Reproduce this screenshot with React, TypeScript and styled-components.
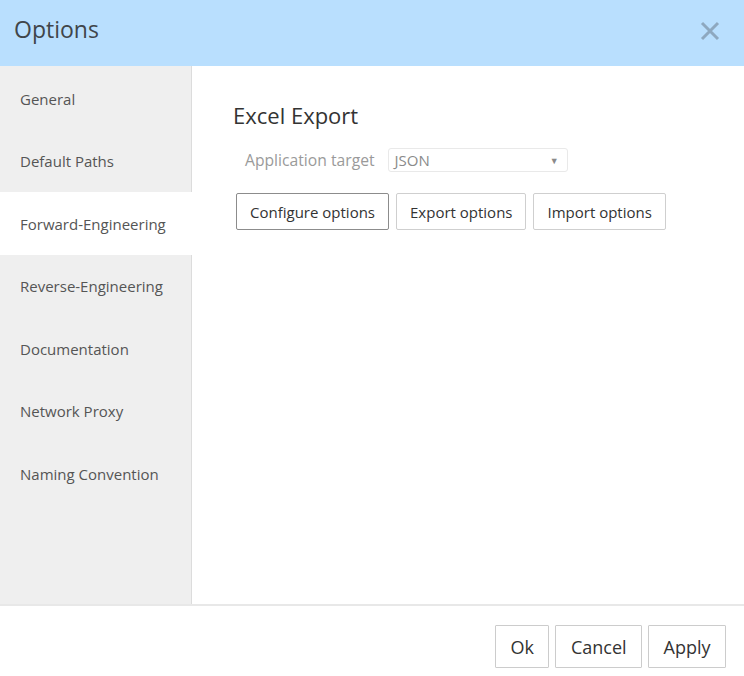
import React from "react";
import styled, { createGlobalStyle } from "styled-components";

const Global = createGlobalStyle`
  html, body { margin: 0; padding: 0; background: #fff; }
  body { font-family: "Open Sans", "Noto Sans", sans-serif; }
  * { box-sizing: border-box; }
`;

const Dialog = styled.div`
  width: 744px;
  height: 676px;
  display: flex;
  flex-direction: column;
  background: #fff;
`;

const Header = styled.div`
  height: 66px;
  flex: 0 0 66px;
  background: #b9dffe;
  display: flex;
  align-items: center;
  justify-content: space-between;
  padding: 0 24px 0 14px;
`;

const Title = styled.h1`
  margin: 0;
  font-size: 23px;
  font-weight: 400;
  color: #40454a;
  line-height: 1;
  padding-bottom: 8px;
`;

const Close = styled.button`
  border: 0;
  background: transparent;
  padding: 0;
  width: 20px;
  height: 20px;
  margin-bottom: 4px;
  display: flex;
  cursor: pointer;
`;

const Body = styled.div`
  flex: 1;
  display: flex;
  min-height: 0;
  border-bottom: 2px solid #e8e8e8;
`;

const Sidebar = styled.nav`
  width: 192px;
  flex: 0 0 192px;
  background: #efefef;
  border-right: 1px solid #dcdcdc;
  padding-top: 1px;
`;

const NavItem = styled.div<{ $active?: boolean }>`
  height: 62.5px;
  display: flex;
  align-items: center;
  padding-left: 20px;
  padding-top: 1px;
  font-size: 15px;
  color: #555;
  background: ${(p) => (p.$active ? "#fff" : "transparent")};
  margin-right: ${(p) => (p.$active ? "-1px" : "0")};
`;

const Content = styled.section`
  flex: 1;
  padding: 33px 0 0 41px;
`;

const Heading = styled.h2`
  margin: 0 0 17px 0;
  font-size: 22px;
  font-weight: 400;
  color: #333;
  line-height: 32px;
`;

const FieldRow = styled.div`
  display: flex;
  align-items: center;
  padding-left: 12px;
  gap: 13px;
  margin-bottom: 21px;
`;

const Label = styled.span`
  font-size: 15.7px;
  color: #9a9a9a;
`;

const Select = styled.div`
  width: 180px;
  height: 24px;
  border: 1px solid #e9e9e9;
  border-radius: 3px;
  display: flex;
  align-items: center;
  justify-content: space-between;
  padding: 0 8px 0 6px;
  font-size: 15px;
  color: #8a8a8a;
`;

const Arrow = styled.span`
  font-size: 9px;
  color: #8a8a8a;
`;

const ButtonRow = styled.div`
  display: flex;
  gap: 7px;
  padding-left: 3px;
`;

const Button = styled.button<{ $focused?: boolean }>`
  font-family: "Open Sans", "Noto Sans", sans-serif;
  height: 37px;
  padding: 0 13px;
  font-size: 15px;
  color: #333;
  background: #fff;
  border: 1px solid ${(p) => (p.$focused ? "#8c8c8c" : "#cfcfcf")};
  border-radius: 2px;
  cursor: pointer;
`;

const Footer = styled.div`
  flex: 0 0 70px;
  display: flex;
  justify-content: flex-end;
  align-items: flex-start;
  gap: 6px;
  padding: 19px 18px 0 0;
`;

const FooterButton = styled.button`
  font-family: "Open Sans", "Noto Sans", sans-serif;
  height: 43px;
  padding: 0 14.5px;
  font-size: 18px;
  color: #333;
  background: #fff;
  border: 1px solid #cccccc;
  border-radius: 1px;
  cursor: pointer;
`;

const items = [
  "General",
  "Default Paths",
  "Forward-Engineering",
  "Reverse-Engineering",
  "Documentation",
  "Network Proxy",
  "Naming Convention",
];

export default function App() {
  return (
    <>
      <Global />
      <Dialog>
        <Header>
          <Title>Options</Title>
          <Close aria-label="Close">
            <svg width="20" height="20" viewBox="0 0 20 20">
              <path
                d="M2 2 L18 18 M18 2 L2 18"
                stroke="#8ea8bf"
                strokeWidth="3"
                strokeLinecap="butt"
              />
            </svg>
          </Close>
        </Header>
        <Body>
          <Sidebar>
            {items.map((it) => (
              <NavItem key={it} $active={it === "Forward-Engineering"}>
                {it}
              </NavItem>
            ))}
          </Sidebar>
          <Content>
            <Heading>Excel Export</Heading>
            <FieldRow>
              <Label>Application target</Label>
              <Select>
                <span>JSON</span>
                <Arrow>▼</Arrow>
              </Select>
            </FieldRow>
            <ButtonRow>
              <Button $focused>Configure options</Button>
              <Button>Export options</Button>
              <Button>Import options</Button>
            </ButtonRow>
          </Content>
        </Body>
        <Footer>
          <FooterButton>Ok</FooterButton>
          <FooterButton>Cancel</FooterButton>
          <FooterButton>Apply</FooterButton>
        </Footer>
      </Dialog>
    </>
  );
}
